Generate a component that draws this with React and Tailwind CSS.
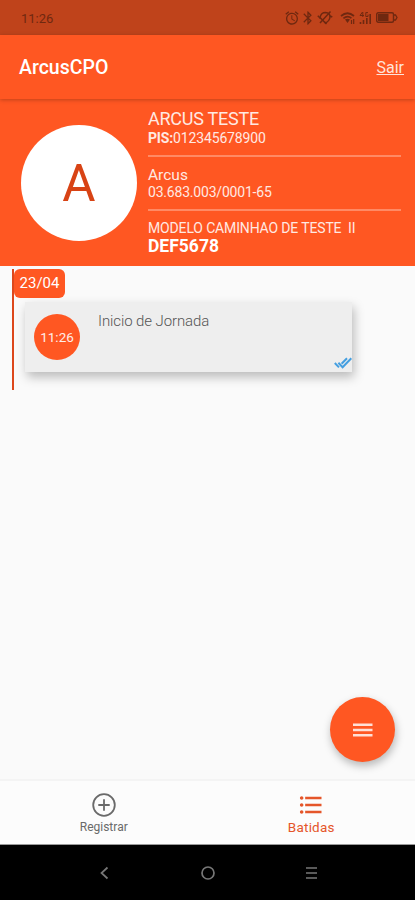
import { useState } from 'react';
import { MdAlarm, MdBluetooth, MdFormatListBulleted } from 'react-icons/md';

const punches = [
  { id: 1, time: '11:26', title: 'Inicio de Jornada' },
];

function MutedBellIcon() {
  return (
    <svg width="16" height="15" viewBox="0 0 16 15" fill="none" stroke="currentColor" strokeWidth="1.5">
      <path d="M3 7.5 Q4 2.5 8.5 2.5 Q13 2.8 13 7 Q12.5 11 8.5 13 Z" />
      <path d="M3 13 L13.5 1.5 M0.8 5.8 L3.5 8.5 M7.5 12 L9.5 14 M13 6 L15.3 7" />
    </svg>
  );
}

function WifiIcon() {
  return (
    <svg width="16" height="14" viewBox="0 0 16 14" fill="none" stroke="currentColor" strokeWidth="1.7">
      <path d="M1 5 Q7.5 -0.5 14 5" />
      <path d="M3.4 7.4 Q7.5 3.8 11.4 7.2" />
      <path d="M5 8.5 L7.5 12 L10 8.5 Q7.5 7 5 8.5Z" fill="currentColor" stroke="none" />
      <path d="M11.5 9 V13 M13.7 8 V13" strokeWidth="1.2" />
    </svg>
  );
}

function SignalIcon() {
  return (
    <svg width="13" height="14" viewBox="0 0 13 14" fill="none" stroke="currentColor">
      <path d="M3.5 1 L1 4.5 H5 M3.8 1 V6 M9 1.6 H6.8 V5.5 H9 V3.6" strokeWidth="1" />
      <path d="M1.5 13 V11 M4.5 13 V9 M7.8 13 V7 M11.2 13 V3" strokeWidth="1.6" />
    </svg>
  );
}

function BatteryIcon() {
  return (
    <svg width="22" height="11" viewBox="0 0 22 11" fill="none" stroke="currentColor">
      <rect x="0.7" y="0.7" width="16.8" height="9.6" rx="1.5" strokeWidth="1.4" />
      <rect x="2" y="2" width="10.5" height="7" fill="currentColor" stroke="none" />
      <path d="M18 3 H19.5 L21 5.5 L19.5 8 H18" strokeWidth="1.3" />
    </svg>
  );
}

function PlusCircle() {
  return (
    <svg width="28" height="28" viewBox="0 0 28 28" fill="none" stroke="currentColor" strokeWidth="1.8">
      <circle cx="14" cy="14" r="10.8" />
      <path d="M14 8.3 V19.7 M8.3 14 H19.7" />
    </svg>
  );
}

function DoubleCheck() {
  return (
    <svg width="18" height="12" viewBox="0 0 18 12" fill="none" stroke="#459fe0" strokeWidth="2">
      <path d="M0.8 6 L5 10.4 M4.4 5.8 L8.6 10.2 L17.3 1.2 M7.6 6.8 L13 1.2" />
    </svg>
  );
}

function App() {
  const [tab, setTab] = useState('batidas');

  return (
    <div className="flex h-[900px] w-[415px] flex-col overflow-hidden bg-[#fafafa] font-[Roboto,sans-serif]">
      <div className="flex h-[35px] shrink-0 items-center bg-[#bf431b] pr-[17px] pl-[21px] text-[#6f2810]">
        <span className="mt-0.5 text-[13px]">11:26</span>
        <div className="ml-auto flex items-center">
          <MdAlarm className="size-[16px]" />
          <MdBluetooth className="size-[16px]" />
          <span className="ml-px"><MutedBellIcon /></span>
          <span className="ml-[7px]"><WifiIcon /></span>
          <span className="ml-[3px]"><SignalIcon /></span>
          <span className="ml-[4px]"><BatteryIcon /></span>
        </div>
      </div>

      <header className="z-10 flex h-[64px] shrink-0 items-center justify-between bg-[#ff5722] pr-[11px] pl-[19px] text-white shadow-[0_1px_4px_rgba(0,0,0,0.25)]">
        <h1 className="mt-[2px] text-[19.5px] font-medium">ArcusCPO</h1>
        <button className="mt-[2px] text-[16px] text-[#ffe3da] underline">Sair</button>
      </header>

      <section className="flex h-[167px] shrink-0 bg-[#ff5722] pr-[14px] pl-[21px] text-[#ffe9e2]">
        <div className="mt-[26px] flex size-[116px] shrink-0 items-center justify-center rounded-full bg-white">
          <span className="text-[51px] leading-none text-[#d84315]">A</span>
        </div>
        <div className="ml-[11px] flex flex-1 flex-col pt-[10px] whitespace-pre">
          <p className="text-[18px] leading-[20px] tracking-[-0.25px]">ARCUS TESTE</p>
          <p className="text-[14px] leading-[18px] tracking-[-0.15px]"><b>PIS:</b>012345678900</p>
          <hr className="mt-[8px] border-t-2 border-[#ff8a65]" />
          <p className="mt-[9px] text-[15.5px] leading-[18px]">Arcus</p>
          <p className="text-[14px] leading-[16px] tracking-[-0.2px]">03.683.003/0001-65</p>
          <hr className="mt-[9px] border-t-2 border-[#ff8a65]" />
          <p className="mt-[9px] text-[14px] leading-[17px] tracking-[-0.15px]">MODELO CAMINHAO DE TESTE  II</p>
          <p className="text-[17.5px] leading-[19px] font-bold text-white">DEF5678</p>
        </div>
      </section>

      <main className="relative flex-1 pt-[3px] pl-[12px]">
        <div className="h-[121px] border-l-[2.5px] border-[#dd481c]">
          <div className="flex h-[29px] w-[51px] items-center justify-center rounded-[6px] bg-[#ff5722] text-[15px] text-white">
            23/04
          </div>
          {punches.map((punch) => (
            <div
              key={punch.id}
              className="mt-[4px] ml-[11px] flex h-[70px] w-[327px] bg-[#eeeeee] pl-[9px] shadow-[2px_5px_10px_rgba(0,0,0,0.26)]"
            >
              <div className="mt-[12px] flex size-[46px] items-center justify-center rounded-full bg-[#ff5722] text-[13.5px] text-[#ffeee8]">
                {punch.time}
              </div>
              <p className="mt-[9px] ml-[18px] text-[15px] leading-[20px] font-light tracking-[-0.1px] text-[#555]">{punch.title}</p>
              <span className="mb-[3px] ml-auto self-end"><DoubleCheck /></span>
            </div>
          ))}
        </div>

        <button className="absolute right-[20px] bottom-[17px] flex size-[65px] flex-col items-center justify-center rounded-full bg-[#ff5722] shadow-[1px_4px_9px_rgba(0,0,0,0.27)]">
          <svg width="20" height="16" viewBox="0 0 20 16" stroke="#ffe0d6" strokeWidth="2.4">
            <path d="M0 2.7 H19.5 M0 8 H19.5 M0 13.3 H19.5" />
          </svg>
        </button>
      </main>

      <nav className="grid h-[66px] shrink-0 grid-cols-2 border-t-2 border-b border-t-[#f4f4f4] border-b-[#9a9a9a] bg-[#fcfcfc]">
        <button onClick={() => setTab('registrar')} className="flex flex-col items-center pt-[10px] text-[#6a6a6a]">
          <PlusCircle />
          <span className={tab === 'registrar' ? 'text-[13.5px] leading-[16px]' : 'text-[12px] leading-[17px]'}>Registrar</span>
        </button>
        <button onClick={() => setTab('batidas')} className="flex flex-col items-center pt-[10px] text-[#e5562a]">
          <MdFormatListBulleted className="size-[28px]" />
          <span className={tab === 'batidas' ? 'text-[13.5px] leading-[16px] tracking-[0.2px]' : 'text-[12px] leading-[17px]'}>Batidas</span>
        </button>
      </nav>

      <div className="flex h-[55px] shrink-0 items-center justify-center bg-black text-[#777]">
        <svg width="220" height="16" viewBox="0 0 220 16" fill="none" stroke="currentColor" strokeWidth="1.7">
          <path d="M9.5 2.5 L3.5 8 L9.5 13.5" />
          <circle cx="110" cy="8" r="6" />
          <path d="M208 3 H219 M208 8 H219 M208 13 H219" />
        </svg>
      </div>
    </div>
  );
}

export default App;
